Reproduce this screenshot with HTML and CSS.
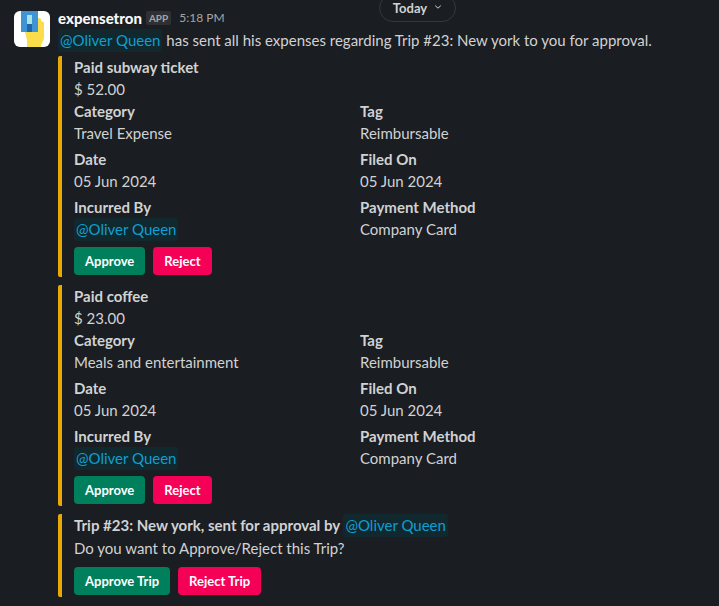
FILE: index.html
```html
<!DOCTYPE html>
<html lang="en">
<head>
    <meta charset="UTF-8">
    <meta name="viewport" content="width=device-width, initial-scale=1.0">
    <title>expensetron</title>
    <link rel="stylesheet" href="styles.css">
</head>
<body>

    <div class="day-row">
        <div class="day-pill">
            <span>Today</span>
            <svg class="chevron" width="8" height="8" viewBox="0 0 8 8"><path d="M1.2 2.6 4 5.2l2.8-2.6" fill="none" stroke="#d1d2d3" stroke-width="1"/></svg>
        </div>
    </div>

    <div class="message">
        <div class="avatar">
            <svg width="36" height="36" viewBox="0 0 36 36">
                <rect width="36" height="36" rx="6" fill="#fff"/>
                <path d="M13 36V29l-2-8h13V8c0-1.500 2.500-1.500 3 .5l1 2.500c1-1 2-.5 2 2v13c0 4-3 6-3 10z" fill="#fbdc4b"/>
                <rect x="7" y="0" width="17" height="21" fill="#3f94d6"/>
                <rect x="13" y="4" width="5" height="9" fill="#a8e4e6"/>
                <rect x="13" y="13" width="5" height="8" fill="#1f66a8"/>
            </svg>
        </div>
        <div class="content">
            <div class="meta">
                <span class="sender">expensetron</span>
                <span class="app-tag">APP</span>
                <span class="time">5:18 PM</span>
            </div>
            <p class="intro"><span class="mention">@Oliver Queen</span> has sent all his expenses regarding Trip #23: New york to you for approval.</p>

            <div class="attachment">
                <p class="label">Paid subway ticket</p>
                <p class="value">$ 52.00</p>
                <div class="fields">
                    <div class="field"><p class="label">Category</p><p class="value">Travel Expense</p></div>
                    <div class="field"><p class="label">Tag</p><p class="value">Reimbursable</p></div>
                    <div class="field"><p class="label">Date</p><p class="value">05 Jun 2024</p></div>
                    <div class="field"><p class="label">Filed On</p><p class="value">05 Jun 2024</p></div>
                    <div class="field"><p class="label">Incurred By</p><p class="value"><span class="mention">@Oliver Queen</span></p></div>
                    <div class="field"><p class="label">Payment Method</p><p class="value">Company Card</p></div>
                </div>
                <div class="actions">
                    <button class="btn approve">Approve</button>
                    <button class="btn reject">Reject</button>
                </div>
            </div>

            <div class="attachment">
                <p class="label">Paid coffee</p>
                <p class="value">$ 23.00</p>
                <div class="fields">
                    <div class="field"><p class="label">Category</p><p class="value">Meals and entertainment</p></div>
                    <div class="field"><p class="label">Tag</p><p class="value">Reimbursable</p></div>
                    <div class="field"><p class="label">Date</p><p class="value">05 Jun 2024</p></div>
                    <div class="field"><p class="label">Filed On</p><p class="value">05 Jun 2024</p></div>
                    <div class="field"><p class="label">Incurred By</p><p class="value"><span class="mention">@Oliver Queen</span></p></div>
                    <div class="field"><p class="label">Payment Method</p><p class="value">Company Card</p></div>
                </div>
                <div class="actions">
                    <button class="btn approve">Approve</button>
                    <button class="btn reject">Reject</button>
                </div>
            </div>

            <div class="attachment">
                <p class="label">Trip #23: New york, sent for approval by <span class="mention">@Oliver Queen</span></p>
                <p class="value">Do you want to Approve/Reject this Trip?</p>
                <div class="actions trip-actions">
                    <button class="btn approve">Approve Trip</button>
                    <button class="btn reject">Reject Trip</button>
                </div>
            </div>
        </div>
    </div>

</body>
</html>
```

FILE: styles.css
```css
html, body {
    height: 100%;
}
body {
    font-family: Lato, "Noto Sans", sans-serif;
    background-color: #1a1d21;
    color: #d1d2d3;
    font-size: 15px;
    line-height: 22px;
    margin: 0;
    overflow: hidden;
}
p {
    margin: 0;
}
.day-row {
    display: flex;
    justify-content: center;
    height: 0;
    padding-left: 116px;
}
.day-pill {
    display: flex;
    align-items: center;
    justify-content: center;
    gap: 7px;
    width: 77px;
    height: 28px;
    margin-top: -6px;
    box-sizing: border-box;
    border: 1px solid #35373b;
    border-radius: 14px;
    font-size: 13px;
    font-weight: 700;
}
.chevron {
    margin-top: -3px;
}
.message {
    display: flex;
    gap: 8px;
    padding: 7px 14px 0;
}
.avatar {
    width: 36px;
    height: 36px;
    margin-top: 4px;
    flex-shrink: 0;
}
.avatar svg {
    display: block;
}
.content {
    flex: 1;
    min-width: 0;
}
.meta {
    display: flex;
    align-items: center;
    height: 22px;
}
.sender {
    font-weight: 900;
    color: #f8f8f8;
}
.app-tag {
    margin-left: 4px;
    padding: 0 3px;
    height: 14px;
    line-height: 14px;
    font-size: 10px;
    font-weight: 700;
    color: #a4a5a7;
    background-color: #2e3034;
    border-radius: 2px;
}
.time {
    margin-left: 8px;
    font-size: 12px;
    color: #a4a5a7;
}
.intro {
    white-space: nowrap;
}
.mention {
    display: inline-block;
    line-height: 23px;
    color: #0f9fd0;
    font-weight: 400;
    background-color: #12282f;
    border-radius: 3px;
    padding: 0 2px;
}
.attachment {
    border-left: 4px solid #e8a906;
    border-radius: 2px;
    padding-left: 12px;
    padding-bottom: 2px;
    margin-top: 4px;
    margin-bottom: 8px;
}
.label {
    font-weight: 700;
}
.fields {
    display: grid;
    grid-template-columns: 286px 1fr;
    row-gap: 4px;
}
.actions {
    display: flex;
    gap: 8px;
    margin-top: 6px;
}
.trip-actions {
    margin-top: 8px;
}
.btn {
    font-family: inherit;
    font-size: 13px;
    font-weight: 700;
    color: #fff;
    height: 28px;
    padding: 0 11px;
    border: 0;
    border-radius: 4px;
}
.approve {
    background-color: #007f5c;
}
.reject {
    background-color: #f50057;
}
```
